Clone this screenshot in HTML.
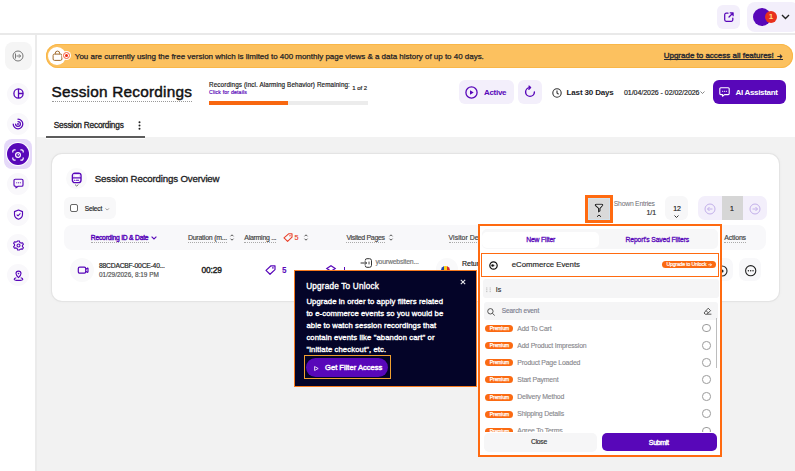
<!DOCTYPE html>
<html><head><meta charset="utf-8">
<style>
*{box-sizing:border-box;margin:0;padding:0}
html,body{width:795px;height:471px;overflow:hidden}
body{position:relative;background:#f2f2f2;font-family:"Liberation Sans",sans-serif;color:#1c1c1e}
.a{position:absolute}
.t{position:absolute;white-space:nowrap;line-height:1}
.m{-webkit-text-stroke:0.18px currentColor}
.m2{-webkit-text-stroke:0.35px currentColor}
.sm{-webkit-text-stroke:0.4px currentColor}
.m3{-webkit-text-stroke:0.3px currentColor}
svg{position:absolute;overflow:visible}
.lav{background:#f3effb;border-radius:6px}
.sb{position:absolute;width:22px;height:22px;border-radius:50%;background:#f9f8fb}
.prem{position:absolute;left:485.5px;width:28px;height:7px;border-radius:4px;background:#fb6a12;color:#fff;font-size:5px;line-height:7.4px;text-align:center;-webkit-text-stroke:0.25px #fff;letter-spacing:-0.1px}
.itm{position:absolute;font-size:6.9px;letter-spacing:-0.2px;line-height:1;color:#87878c;white-space:nowrap;-webkit-text-stroke:0.12px currentColor}
.rad{position:absolute;left:702.5px;width:8.5px;height:8.5px;border-radius:50%;border:1px solid #9b9b9b;background:#fff}
</style></head><body>

<!-- header -->
<div class="a" style="left:0;top:0;width:795px;height:35px;background:#fff;border-bottom:2px solid #e9e9e9"></div>
<div class="a lav" style="left:717px;top:5px;width:23px;height:24px"></div>
<svg style="left:723px;top:11px" width="12" height="12" viewBox="0 0 12 12"><path d="M5 2.2H3.2A1.5 1.5 0 0 0 1.7 3.7v5.1a1.5 1.5 0 0 0 1.5 1.5h5.1a1.5 1.5 0 0 0 1.5-1.5V7" fill="none" stroke="#5807b9" stroke-width="1.25" stroke-linecap="round"/><path d="M6 6l4-4M7.2 1.8h2.9v2.9" fill="none" stroke="#5807b9" stroke-width="1.25" stroke-linecap="round" stroke-linejoin="round"/></svg>
<div class="a lav" style="left:747px;top:2px;width:52px;height:30px;border-radius:8px"></div>
<div class="a" style="left:752.5px;top:7.7px;width:18px;height:18px;border-radius:50%;background:#5807b9"></div>
<div class="a" style="left:765px;top:10.7px;width:12px;height:12px;border-radius:50%;background:#e8301c;color:#ffd98a;font-size:8px;font-weight:bold;text-align:center;line-height:12px">1</div>
<svg style="left:781px;top:14px" width="9" height="6" viewBox="0 0 9 6"><path d="M1 1l3.5 3.5L8 1" fill="none" stroke="#222" stroke-width="1.4"/></svg>

<!-- sidebar -->
<div class="a" style="left:0;top:35px;width:37px;height:436px;background:#fff;border-right:2px solid #ebebeb"></div>
<div class="a" style="left:5px;top:42px;width:27px;height:28px;border-radius:8px;background:#f5f5f5"></div>
<svg style="left:12px;top:50px" width="12" height="12" viewBox="0 0 12 12"><circle cx="6" cy="6" r="5" fill="none" stroke="#777" stroke-width="1"/><path d="M3.5 3.5v5M4.5 6h4M7 4.3L8.7 6 7 7.7" fill="none" stroke="#777" stroke-width="1"/></svg>
<div class="sb" style="left:7px;top:82.7px"></div>
<svg style="left:12.5px;top:88.2px" width="11" height="11" viewBox="0 0 11 11"><circle cx="5.5" cy="5.5" r="4.6" fill="none" stroke="#5807b9" stroke-width="1.3"/><path d="M5.5 1v9M5.5 5.5h4.5" stroke="#5807b9" stroke-width="1.3"/></svg>
<div class="sb" style="left:7px;top:113px"></div>
<svg style="left:12px;top:118px" width="12" height="12" viewBox="0 0 12 12"><path d="M6 1.2a4.8 4.8 0 1 1-4.8 4.8" fill="none" stroke="#5807b9" stroke-width="1.25" stroke-linecap="round"/><path d="M6 3.6a2.4 2.4 0 1 1-2.4 2.4" fill="none" stroke="#5807b9" stroke-width="1.25" stroke-linecap="round"/><circle cx="6" cy="6" r="0.9" fill="#5807b9"/></svg>
<div class="a" style="left:4px;top:139px;width:28px;height:30px;border-radius:8px;background:#e5d9f9"></div>
<div class="a" style="left:7px;top:142.8px;width:22px;height:22px;border-radius:50%;background:#5807b9;box-shadow:0 0 0 1px #fff"></div>
<svg style="left:12px;top:149px" width="12" height="12" viewBox="0 0 12 12"><path d="M.8 3.6V2.4A1.6 1.6 0 0 1 2.4.8h1.2M8.4.8h1.2a1.6 1.6 0 0 1 1.6 1.6v1.2M11.2 8.4v1.2a1.6 1.6 0 0 1-1.6 1.6H8.4M3.6 11.2H2.4A1.6 1.6 0 0 1 .8 9.6V8.4" fill="none" stroke="#fff" stroke-width="1.2"/><circle cx="6" cy="6" r="2.4" fill="none" stroke="#fff" stroke-width="1.2"/><circle cx="6.3" cy="5.7" r=".7" fill="#fff"/></svg>
<div class="sb" style="left:7px;top:172.8px"></div>
<svg style="left:12.5px;top:178.3px" width="11" height="11" viewBox="0 0 11 11"><path d="M2.3 1.2h6.4a1.3 1.3 0 0 1 1.3 1.3v4.4a1.3 1.3 0 0 1-1.3 1.3H5.2L3 9.8V8.2h-.7A1.3 1.3 0 0 1 1 6.9V2.5a1.3 1.3 0 0 1 1.3-1.3z" fill="none" stroke="#5807b9" stroke-width="1.15" stroke-linejoin="round"/><path d="M3.7 4.7h.1M5.5 4.7h.1M7.3 4.7h.1" stroke="#5807b9" stroke-width="1.1" stroke-linecap="round"/></svg>
<div class="sb" style="left:7px;top:203.7px"></div>
<svg style="left:12.5px;top:209.2px" width="11" height="11" viewBox="0 0 11 11"><path d="M5.5 1L9.5 2.6v2.8c0 2.4-1.7 4-4 4.8-2.3-.8-4-2.4-4-4.8V2.6z" fill="none" stroke="#5807b9" stroke-width="1.15" stroke-linejoin="round"/><path d="M3.7 5.6l1.3 1.2 2.4-2.4" fill="none" stroke="#5807b9" stroke-width="1.1"/></svg>
<div class="sb" style="left:7px;top:234px"></div>
<svg style="left:12.5px;top:239.5px" width="11" height="11" viewBox="0 0 11 11"><path d="M4.6 1h1.8l.4 1.4 1.3.7 1.4-.4.9 1.6-1 1.1v1.2l1 1.1-.9 1.6-1.4-.4-1.3.7L6.4 10H4.6l-.4-1.4-1.3-.7-1.4.4-.9-1.6 1-1.1V4.4l-1-1.1.9-1.6 1.4.4 1.3-.7z" fill="none" stroke="#5807b9" stroke-width="1.1" stroke-linejoin="round"/><circle cx="5.5" cy="5.5" r="1.5" fill="none" stroke="#5807b9" stroke-width="1.1"/></svg>
<div class="sb" style="left:7px;top:264.3px"></div>
<svg style="left:12.5px;top:269.8px" width="11" height="11" viewBox="0 0 11 11"><path d="M5.5 7.6C4 6.2 3 5 3 3.6a2.5 2.5 0 0 1 5 0C8 5 7 6.2 5.5 7.6z" fill="none" stroke="#5807b9" stroke-width="1.1"/><circle cx="5.5" cy="3.6" r=".8" fill="#5807b9"/><path d="M3.3 7.8C2 8.1 1.2 8.6 1.2 9.2c0 .8 1.9 1.2 4.3 1.2s4.3-.4 4.3-1.2c0-.6-.8-1.1-2.1-1.4" fill="none" stroke="#5807b9" stroke-width="1.1"/></svg>

<!-- main white top -->
<div class="a" style="left:37px;top:35px;width:758px;height:102px;background:#fff"></div>

<!-- banner -->
<div class="a" style="left:45.5px;top:43.6px;width:747px;height:24.2px;border-radius:12px;background:#fcc15f;box-shadow:inset 0 0 0 1px #f9b748"></div>
<div class="a" style="left:48.3px;top:47px;width:17.6px;height:18px;border-radius:50%;background:#fff"></div>
<svg style="left:52px;top:50px" width="11" height="11" viewBox="0 0 11 11"><path d="M3.3 4.2V3.3a2.2 2.2 0 0 1 4.4 0v.9" fill="none" stroke="#a06a2c" stroke-width="1"/><path d="M2.4 4.1h6.2a1.3 1.3 0 0 1 1.3 1.3v3.6a1.4 1.4 0 0 1-1.4 1.4H2.5a1.4 1.4 0 0 1-1.4-1.4V5.4a1.3 1.3 0 0 1 1.3-1.3z" fill="none" stroke="#a06a2c" stroke-width="1"/></svg>
<div class="a" style="left:61.6px;top:51.1px;width:9.2px;height:9.2px;border-radius:50%;background:#fff"></div>
<div class="a" style="left:62.7px;top:52.2px;width:7px;height:7px;border-radius:50%;border:1px solid #f5603a"></div>
<div class="a" style="left:64.7px;top:54.2px;width:3px;height:3px;border-radius:50%;background:#ee2a10"></div>
<div class="t m" id="bantxt" style="left:74.8px;top:53px;font-size:8.0px;color:#1f1f26;-webkit-text-stroke:0.25px #1f1f26;letter-spacing:-0.017px">You are currently using the free version which is limited to 400 monthly page views &amp; a data history of up to 40 days.</div>
<div class="t sm" id="upg" style="left:663.7px;top:51.88px;font-size:8.0px;color:#2b2b33;letter-spacing:-0.006px">Upgrade to access all features!</div>
<div class="a" style="left:663.7px;top:58.8px;width:119px;height:0.9px;background:#2b2b33"></div>
<svg style="left:776.8px;top:53.8px" width="5.5" height="5" viewBox="0 0 5.5 5"><path d="M.3 2.5h4.6M2.9.6l1.9 1.9-1.9 1.9" fill="none" stroke="#2b2b33" stroke-width="1.1"/></svg>

<!-- title -->
<div class="t" id="title" style="left:51.5px;top:84.1px;font-size:15.39px;-webkit-text-stroke:0.45px #111;color:#111;letter-spacing:0.215px">Session Recordings</div>
<div class="a" style="left:52px;top:101px;width:140px;height:0;border-top:1px dotted #999"></div>
<div class="t m" id="rem" style="left:209px;top:82px;font-size:6.3px;color:#222;letter-spacing:0.118px">Recordings (incl. Alarming Behavior) Remaining:</div>
<div class="t m" id="cfd" style="left:209px;top:90px;font-size:5.2px;color:#5807b9;letter-spacing:0.171px">Click for details</div>
<div class="t m" id="oneof" style="left:352.2px;top:85px;font-size:6px;color:#222;letter-spacing:-0.023px">1 of 2</div>
<div class="a" style="left:209px;top:101px;width:158.5px;height:3.8px;background:#ececec"></div>
<div class="a" style="left:209px;top:101px;width:79px;height:3.8px;background:#f8670f"></div>

<!-- header buttons -->
<div class="a lav" style="left:459px;top:80.3px;width:55px;height:23.4px"></div>
<svg style="left:465px;top:86px" width="13" height="13" viewBox="0 0 13 13"><circle cx="6.5" cy="6.5" r="5.6" fill="none" stroke="#5807b9" stroke-width="1.3"/><path d="M5 4.2v4.6l3.7-2.3z" fill="#5807b9"/></svg>
<div class="t" id="active" style="left:484px;top:89px;font-size:8px;font-weight:bold;color:#5807b9;letter-spacing:-0.303px">Active</div>
<div class="a lav" style="left:518px;top:80.3px;width:24px;height:23.4px"></div>
<svg style="left:524px;top:86px" width="12" height="12" viewBox="0 0 12 12"><path d="M6 1.6A4.4 4.4 0 1 0 10.4 6" fill="none" stroke="#5807b9" stroke-width="1.4" stroke-linecap="round"/><path d="M4.9 .1L6.6 1.6 4.9 3.2" fill="none" stroke="#5807b9" stroke-width="1.3" stroke-linecap="round" stroke-linejoin="round"/></svg>
<svg style="left:551.5px;top:87.5px" width="10" height="10" viewBox="0 0 10 10"><circle cx="5" cy="5" r="4.2" fill="none" stroke="#333" stroke-width="1.1"/><path d="M5 2.6V5l1.6 1.2" fill="none" stroke="#333" stroke-width="1.1"/></svg>
<div class="t" id="l30" style="left:566.6px;top:89px;font-size:8px;font-weight:bold;color:#1c1c1e;letter-spacing:-0.157px">Last 30 Days</div>
<div class="t m" id="dates" style="left:624px;top:89px;font-size:7px;color:#1c1c1e;letter-spacing:-0.036px">01/04/2026 - 02/02/2026</div>
<svg style="left:700px;top:91px" width="5" height="3" viewBox="0 0 5 3"><path d="M.5.5l2 2 2-2" fill="none" stroke="#555" stroke-width=".7"/></svg>
<div class="a" style="left:713px;top:80.2px;width:73px;height:23.5px;border-radius:6px;background:#5807b9"></div>
<svg style="left:718.5px;top:87px" width="11" height="10" viewBox="0 0 11 10"><path d="M1.8.8h7.4a1 1 0 0 1 1 1v4.8a1 1 0 0 1-1 1H5.5L3.5 9.2V7.6H1.8a1 1 0 0 1-1-1V1.8a1 1 0 0 1 1-1z" fill="none" stroke="#fff" stroke-width="1.1" stroke-linejoin="round"/><path d="M3.5 4.2h.2M5.4 4.2h.2M7.3 4.2h.2" stroke="#fff" stroke-width="1.1" stroke-linecap="round"/></svg>
<div class="t" id="aia" style="left:735.5px;top:89px;font-size:8px;font-weight:bold;color:#fff;letter-spacing:-0.322px">AI Assistant</div>

<!-- tab -->
<div class="t m3" id="tab" style="left:53.8px;top:120.85px;font-size:8.3px;color:#222;letter-spacing:-0.223px">Session Recordings</div>
<svg style="left:138px;top:121px" width="3" height="9" viewBox="0 0 3 9"><circle cx="1.5" cy="1.2" r="1" fill="#222"/><circle cx="1.5" cy="4.5" r="1" fill="#222"/><circle cx="1.5" cy="7.8" r="1" fill="#222"/></svg>
<div class="a" style="left:45.5px;top:135.8px;width:99.5px;height:3px;background:#fff"></div>
<div class="a" style="left:45.5px;top:135.8px;width:99.5px;height:1.8px;background:#5c5c5c"></div>

<!-- card -->
<div class="a" style="left:51.6px;top:154px;width:727.4px;height:147px;border-radius:10px;background:#fff;box-shadow:0 0 0 1px #e4e4e4,0 0 4px rgba(0,0,0,.05)"></div>
<div class="a" style="left:65.5px;top:168.3px;width:21px;height:21px;border-radius:50%;background:#f9f9fa"></div>
<svg style="left:70.5px;top:172.3px" width="11" height="15" viewBox="0 0 11 15"><rect x="1.4" y="1.2" width="8.6" height="9.4" rx="2.4" fill="#fff" stroke="#5807b9" stroke-width="1.4"/><rect x="2.2" y="2" width="7" height="3.6" rx="1" fill="#e3d4f8"/><rect x="3.3" y="2.9" width="4.8" height="1.8" rx=".9" fill="#fff"/><path d="M1.4 5.9h8.6" stroke="#5807b9" stroke-width="1.2"/><path d="M3.4 8.2h.3M5.2 8.2h2.4" stroke="#5807b9" stroke-width="1.1" stroke-linecap="round"/><path d="M4 12.6l1.7 1.4 1.7-1.4" fill="none" stroke="#666" stroke-width=".9"/></svg>
<div class="t m3" id="ovr" style="left:94.8px;top:173.83px;font-size:9.7px;color:#1c1c1e;letter-spacing:-0.171px">Session Recordings Overview</div>

<!-- select -->
<div class="a" style="left:64.4px;top:196.7px;width:51.8px;height:22.8px;border-radius:6px;background:#f8f8f9"></div>
<div class="a" style="left:70.4px;top:204.2px;width:7.6px;height:7.6px;border-radius:2px;border:1px solid #666;background:#fff"></div>
<div class="t m" id="sel" style="left:84.8px;top:206px;font-size:6.5px;color:#222;letter-spacing:-0.136px">Select</div>
<svg style="left:104.8px;top:207.6px" width="4.5" height="2.5" viewBox="0 0 5 3"><path d="M.5.5l2 2 2-2" fill="none" stroke="#666" stroke-width=".8"/></svg>

<!-- filter btn / entries / pagination -->
<div class="a" style="left:585.3px;top:195.3px;width:27.4px;height:27.4px;background:#ff6a10"></div>
<div class="a" style="left:588px;top:198px;width:22px;height:22px;background:#d9d9d9;box-shadow:inset 0 0 0 .7px #cfe6f5"></div>
<svg style="left:594px;top:203px" width="10" height="16" viewBox="0 0 10 16"><path d="M2 1.2h6a.8.8 0 0 1 .6 1.3L6 5.3v2.6L4.6 8.9V5.3L1.4 2.5A.8.8 0 0 1 2 1.2z" fill="none" stroke="#fff" stroke-width="2.2" stroke-linejoin="round" opacity=".6"/><path d="M2 1.2h6a.8.8 0 0 1 .6 1.3L6 5.3v2.6L4.6 8.9V5.3L1.4 2.5A.8.8 0 0 1 2 1.2z" fill="none" stroke="#222" stroke-width="1.1" stroke-linejoin="round"/><path d="M3 13.8L5 12l2 1.8" fill="none" stroke="#222" stroke-width="1"/></svg>
<div class="t" id="shown" style="left:613.8px;top:201px;font-size:6.8px;color:#6b6b73;letter-spacing:-0.227px">Shown Entries</div>
<div class="t m" id="oneone" style="left:646.5px;top:210px;font-size:6.96px;color:#333">1/1</div>
<div class="a" style="left:664.5px;top:196.4px;width:23.5px;height:23.6px;border-radius:6px;background:#f7f7f8"></div>
<div class="t m" id="twelve" style="left:673.2px;top:206px;font-size:6.96px;color:#222">12</div>
<svg style="left:674px;top:214.5px" width="5" height="3" viewBox="0 0 5 3"><path d="M.5.5l2 2 2-2" fill="none" stroke="#333" stroke-width="1"/></svg>
<div class="a" style="left:697.7px;top:196.4px;width:69.5px;height:23.6px;border-radius:7px;background:#f3effb"></div>
<div class="a" style="left:721.8px;top:196.4px;width:21.2px;height:23.6px;background:#d6d6d6"></div>
<div class="t m" id="pg1" style="left:730px;top:206px;font-size:6.96px;color:#222">1</div>
<svg style="left:703.5px;top:202.5px" width="12" height="12" viewBox="0 0 12 12"><circle cx="6" cy="6" r="5" fill="none" stroke="#c3b0ea" stroke-width="1"/><path d="M8.5 6h-5M5.5 4L3.5 6l2 2" fill="none" stroke="#c3b0ea" stroke-width="1"/></svg>
<svg style="left:749px;top:202.5px" width="12" height="12" viewBox="0 0 12 12"><circle cx="6" cy="6" r="5" fill="none" stroke="#c3b0ea" stroke-width="1"/><path d="M3.5 6h5M6.5 4l2 2-2 2" fill="none" stroke="#c3b0ea" stroke-width="1"/></svg>

<!-- table header -->
<div class="a" style="left:64.3px;top:225px;width:702px;height:25.2px;border-radius:8px;background:#f8f8fa"></div>
<div class="t sm" id="hrid" style="left:90.8px;top:235px;font-size:6.74px;color:#5807b9;letter-spacing:-0.22px">Recording ID &amp; Date</div>
<div class="a" style="left:90.8px;top:242px;width:58px;border-top:1px dotted #aaa"></div>
<svg style="left:150.9px;top:235.6px" width="6" height="4" viewBox="0 0 6 4"><path d="M.6.6L3 3 5.4.6" fill="none" stroke="#5807b9" stroke-width="1.1"/></svg>
<div class="t m" id="hdur" style="left:187.9px;top:235px;font-size:6.96px;color:#444;letter-spacing:-0.217px">Duration (m...</div>
<div class="a" style="left:187.9px;top:242px;width:39px;border-top:1px dotted #aaa"></div>
<svg style="left:230px;top:234px" width="4" height="7" viewBox="0 0 4 7"><path d="M.5 2.3L2 .8l1.5 1.5M.5 4.7L2 6.2l1.5-1.5" fill="none" stroke="#555" stroke-width="1"/></svg>
<div class="t m" id="halarm" style="left:244.3px;top:235px;font-size:6.96px;color:#444;letter-spacing:-0.27px">Alarming ...</div>
<div class="a" style="left:244.3px;top:242px;width:32px;border-top:1px dotted #aaa"></div>
<svg style="left:282.6px;top:233.3px" width="10" height="9" viewBox="0 0 10 9"><path d="M5.6.8H9v3.4L4.6 8.4 1 4.9z" fill="none" stroke="#e9402a" stroke-width="1.1" stroke-linejoin="round"/><circle cx="7" cy="2.8" r=".7" fill="#e9402a"/></svg>
<div class="t m" style="left:294.6px;top:234px;font-size:7.2px;color:#e9402a">5</div>
<svg style="left:303.5px;top:234px" width="4" height="7" viewBox="0 0 4 7"><path d="M.5 2.3L2 .8l1.5 1.5M.5 4.7L2 6.2l1.5-1.5" fill="none" stroke="#555" stroke-width="1"/></svg>
<div class="t m" id="hvis" style="left:346.4px;top:235px;font-size:6.96px;color:#444;letter-spacing:-0.317px">Visited Pages</div>
<div class="a" style="left:346.4px;top:242px;width:38.6px;border-top:1px dotted #aaa"></div>
<svg style="left:389px;top:234px" width="4" height="7" viewBox="0 0 4 7"><path d="M.5 2.3L2 .8l1.5 1.5M.5 4.7L2 6.2l1.5-1.5" fill="none" stroke="#555" stroke-width="1"/></svg>
<div class="t m" id="hvisit" style="left:448.6px;top:235px;font-size:6.96px;color:#444">Visitor Details</div>
<div class="a" style="left:448.6px;top:242px;width:40px;border-top:1px dotted #aaa"></div>
<div class="t m" id="hact" style="left:724.3px;top:235px;font-size:6.96px;color:#444;letter-spacing:-0.169px">Actions</div>
<div class="a" style="left:724.3px;top:242px;width:22px;border-top:1px dotted #aaa"></div>

<!-- row -->
<div class="a" style="left:70.4px;top:258px;width:24px;height:24px;border-radius:50%;background:#f9f9fa"></div>
<svg style="left:76.5px;top:266.3px" width="12" height="8" viewBox="0 0 12 8"><rect x="1.3" y="1.2" width="7.4" height="6" rx="1.4" fill="none" stroke="#5807b9" stroke-width="1.2"/><path d="M8.8 3.2l1.4-1a.5.5 0 0 1 .8.4v3.2a.5.5 0 0 1-.8.4l-1.4-1" fill="none" stroke="#5807b9" stroke-width="1.2" stroke-linejoin="round"/></svg>
<div class="t m" id="rid" style="left:99px;top:263px;font-size:6.74px;color:#222;letter-spacing:-0.207px">88CDACBF-00CE-40...</div>
<div class="t m" id="rdate" style="left:99px;top:272px;font-size:6.42px;color:#555;letter-spacing:0.023px">01/29/2026, 8:19 PM</div>
<div class="t sm" id="rdur" style="left:201.4px;top:265.73px;font-size:8.35px;color:#222;letter-spacing:-0.073px">00:29</div>
<svg style="left:265px;top:265px" width="11" height="10" viewBox="0 0 11 10"><path d="M6 .8h4v3.8L5 9.3 1 5.4z" fill="none" stroke="#5807b9" stroke-width="1.2" stroke-linejoin="round"/><circle cx="7.9" cy="2.9" r=".8" fill="#5807b9"/></svg>
<div class="t" id="r5" style="left:282px;top:267px;font-size:8.18px;font-weight:bold;color:#5807b9">5</div>
<svg style="left:326px;top:264.5px" width="10" height="7" viewBox="0 0 10 7"><path d="M5 .8L9.2 3.5 5 6.2.8 3.5z" fill="none" stroke="#5807b9" stroke-width="1.2"/></svg>
<div class="a" style="left:344px;top:267px;width:1.2px;height:3px;background:#5807b9"></div>
<svg style="left:359.5px;top:258px" width="13" height="10" viewBox="0 0 13 10"><path d="M5.3 2.6V2.3A1.6 1.6 0 0 1 6.9.7h2.6a2 2 0 0 1 2 2v4.6a2 2 0 0 1-2 2H6.9a1.6 1.6 0 0 1-1.6-1.6v-.3" fill="none" stroke="#333" stroke-width="1"/><path d="M.6 5h6M4.8 3.2L6.6 5 4.8 6.8" fill="none" stroke="#333" stroke-width="1"/><path d="M9 3.6v2.8" stroke="#333" stroke-width=".9"/></svg>
<div class="t m" id="rurl" style="left:375.4px;top:259px;font-size:6.85px;color:#777;letter-spacing:-0.188px">yourwebsiten...</div>
<div class="a" style="left:436px;top:258px;width:22px;height:22px;border-radius:50%;background:#f9f9fa"></div>
<div class="a" style="left:441px;top:265.8px;width:9px;height:9px;border-radius:50%;background:linear-gradient(90deg,#1c3fa8 33%,#fcd116 33%,#fcd116 66%,#d8262c 66%)"></div>
<div class="t m" id="rret" style="left:462px;top:261.41px;font-size:6.96px;color:#222">Returning</div>
<div class="a" style="left:706px;top:258.2px;width:26.8px;height:23px;border-radius:7px;background:#f8f8fa"></div>
<svg style="left:716px;top:265px" width="12" height="12" viewBox="0 0 12 12"><circle cx="6" cy="6" r="5" fill="none" stroke="#222" stroke-width="1.1"/><circle cx="6" cy="6" r="1.6" fill="#222"/></svg>
<div class="a" style="left:738.8px;top:258.2px;width:22.1px;height:23px;border-radius:7px;background:#f8f8fa"></div>
<svg style="left:744.6px;top:264.8px" width="12" height="12" viewBox="0 0 12 12"><circle cx="5.7" cy="5.7" r="5.1" fill="none" stroke="#222" stroke-width="1.1"/><circle cx="3.4" cy="5.7" r=".75" fill="#222"/><circle cx="5.7" cy="5.7" r=".75" fill="#222"/><circle cx="8" cy="5.7" r=".75" fill="#222"/></svg>

<!-- tooltip -->
<div class="a" style="left:293.6px;top:269.6px;width:183.7px;height:117.2px;background:#040428;border:1.4px solid #f77a1e"></div>
<div class="t m2" id="ttitle" style="left:306.2px;top:283px;font-size:8.2px;color:#fff;letter-spacing:0.195px">Upgrade To Unlock</div>
<svg style="left:460.3px;top:279.3px" width="6" height="6" viewBox="0 0 6 6"><path d="M.8.8l4.4 4.4M5.2.8L.8 5.2" stroke="#e8e8ee" stroke-width="1.1"/></svg>
<div class="t m2" id="tl1" style="left:306.4px;top:298px;font-size:7.7px;color:#fff;letter-spacing:0.092px">Upgrade in order to apply filters related</div>
<div class="t m2" id="tl2" style="left:306.4px;top:310px;font-size:7.7px;color:#fff;letter-spacing:0.087px">to e-commerce events so you would be</div>
<div class="t m2" id="tl3" style="left:306.4px;top:322px;font-size:7.7px;color:#fff;letter-spacing:0.092px">able to watch session recordings that</div>
<div class="t m2" id="tl4" style="left:306.4px;top:334px;font-size:7.7px;color:#fff;letter-spacing:0.094px">contain events like "abandon cart" or</div>
<div class="t m2" id="tl5" style="left:306.4px;top:346px;font-size:7.7px;color:#fff;letter-spacing:0.106px">"initiate checkout", etc.</div>
<div class="a" style="left:303.5px;top:355.2px;width:87.2px;height:24px;border:1.3px solid #f0a030"></div>
<div class="a" style="left:305.7px;top:358px;width:82.2px;height:19.2px;border-radius:10px;background:#5807b9"></div>
<svg style="left:313.5px;top:365.5px" width="5" height="5" viewBox="0 0 5 5"><path d="M.6.5v4L4.2 2.5z" fill="none" stroke="#fff" stroke-width=".8" stroke-linejoin="round"/></svg>
<div class="t sm" id="tbtn" style="left:325px;top:363.7px;font-size:7.6px;color:#fff;letter-spacing:0.001px">Get Filter Access</div>

<!-- filter panel -->
<div class="a" style="left:478px;top:224px;width:244px;height:232.8px;background:#fff;border:2.2px solid #ff6a10"></div>
<div class="a" style="left:480.2px;top:226.2px;width:239.6px;height:228.4px;background:#fff"></div>
<div class="a" style="left:482px;top:229px;width:236px;height:19.6px;border-radius:5px;background:#f7f7f8"></div>
<div class="a" style="left:482.3px;top:231.6px;width:116.8px;height:16.4px;border-radius:5px;background:#fff"></div>
<div class="t m3" id="nf" style="left:526.2px;top:237px;font-size:6.8px;color:#5807b9;letter-spacing:-0.155px">New Filter</div>
<div class="t m3" id="rsf" style="left:625.6px;top:237px;font-size:6.8px;color:#5807b9;letter-spacing:-0.146px">Report's Saved Filters</div>
<div class="a" style="left:480.5px;top:253px;width:238px;height:23.5px;background:#fff;border:1.8px solid #ff6a10"></div>
<svg style="left:488.5px;top:260.5px" width="9" height="9" viewBox="0 0 9 9"><circle cx="4.5" cy="4.5" r="3.7" fill="none" stroke="#111" stroke-width="1.2"/><circle cx="3.6" cy="4.5" r="1.3" fill="#111"/><path d="M5.3 3.5L6.5 4.5 5.3 5.5z" fill="#999"/></svg>
<div class="t m" id="ece" style="left:511.8px;top:260.96px;font-size:7.8px;color:#2a2a2a;letter-spacing:-0.018px">eCommerce Events</div>
<div class="a" style="left:662.2px;top:261.1px;width:54px;height:7px;border-radius:4px;background:#fb6a12"></div>
<div class="t m" id="utu" style="left:666.4px;top:262px;font-size:5.2px;color:#fff;letter-spacing:-0.179px">Upgrade to Unlock</div>
<svg style="left:708.3px;top:263.2px" width="4" height="3.6" viewBox="0 0 4 3.6"><path d="M.2 1.8h3.3M2.1.4l1.4 1.4-1.4 1.4" fill="none" stroke="#fff" stroke-width=".8"/></svg>
<div class="a" style="left:482.5px;top:279.3px;width:236px;height:18.5px;border-radius:3px;background:#f5f5f6"></div>
<svg style="left:485.6px;top:286.5px" width="5" height="6" viewBox="0 0 5 6"><path d="M.8.5v5M4.2.5v5" stroke="#aaa" stroke-width=".9" stroke-dasharray="1 .8"/></svg>
<div class="t m" id="is" style="left:495.8px;top:286.3px;font-size:7px;color:#333">Is</div>
<div class="a" style="left:483.7px;top:302px;width:234.5px;height:17.6px;border-radius:3px;background:#f5f5f6"></div>
<svg style="left:486.9px;top:307.5px" width="8.5" height="8" viewBox="0 0 8.5 8"><circle cx="3.4" cy="3.3" r="2.7" fill="none" stroke="#444" stroke-width=".9"/><path d="M5.4 5.3l2.3 2.2" stroke="#444" stroke-width=".9"/></svg>
<div class="t m" id="se" style="left:501.8px;top:308px;font-size:6.5px;color:#7d8191;letter-spacing:-0.083px">Search event</div>
<svg style="left:702.5px;top:307px" width="9" height="8" viewBox="0 0 9 8"><path d="M5.2 1.2l2.4 2.4-3.6 3.6H2.2L1 6l4.2-4.8zM3 3.6l2.4 2.4M4 7.2h4.4" fill="none" stroke="#333" stroke-width=".8" stroke-linejoin="round"/></svg>
<!-- list -->
<div class="a" style="left:480.2px;top:320px;width:239.6px;height:111.5px;background:#fff;overflow:hidden">
</div>
<div class="a" style="left:715.5px;top:318px;width:1.5px;height:49.5px;background:#bdbdbd"></div>
<div class="a" style="left:480.2px;top:320px;width:235px;height:111.5px;overflow:hidden">
  <div class="prem" style="left:5.3px;top:5.10px">Premium</div><div class="itm" style="left:37.1px;top:5.61px">Add To Cart</div><div class="rad" style="left:222.3px;top:3.90px"></div>
  <div class="prem" style="left:5.3px;top:22.20px">Premium</div><div class="itm" style="left:37.1px;top:22.71px">Add Product Impression</div><div class="rad" style="left:222.3px;top:21.00px"></div>
  <div class="prem" style="left:5.3px;top:39.30px">Premium</div><div class="itm" style="left:37.1px;top:39.81px">Product Page Loaded</div><div class="rad" style="left:222.3px;top:38.10px"></div>
  <div class="prem" style="left:5.3px;top:56.40px">Premium</div><div class="itm" style="left:37.1px;top:56.91px">Start Payment</div><div class="rad" style="left:222.3px;top:55.20px"></div>
  <div class="prem" style="left:5.3px;top:73.50px">Premium</div><div class="itm" style="left:37.1px;top:74.01px">Delivery Method</div><div class="rad" style="left:222.3px;top:72.30px"></div>
  <div class="prem" style="left:5.3px;top:90.60px">Premium</div><div class="itm" style="left:37.1px;top:91.11px">Shipping Details</div><div class="rad" style="left:222.3px;top:89.40px"></div>
  <div class="prem" style="left:5.3px;top:107.70px">Premium</div><div class="itm" style="left:37.1px;top:108.21px">Agree To Terms</div><div class="rad" style="left:222.3px;top:106.50px"></div>
</div>
<div class="a" style="left:484px;top:432.5px;width:112.6px;height:19px;border-radius:5px;background:#f6f6f7"></div>
<div class="t m" id="close" style="left:531.1px;top:439px;font-size:6.8px;color:#333;letter-spacing:-0.323px">Close</div>
<div class="a" style="left:601.5px;top:433.2px;width:115.3px;height:17.6px;border-radius:5px;background:#5807b9"></div>
<div class="t sm" id="submit" style="left:648.8px;top:438.6px;font-size:7px;color:#fff;letter-spacing:-0.339px">Submit</div>

</body></html>
